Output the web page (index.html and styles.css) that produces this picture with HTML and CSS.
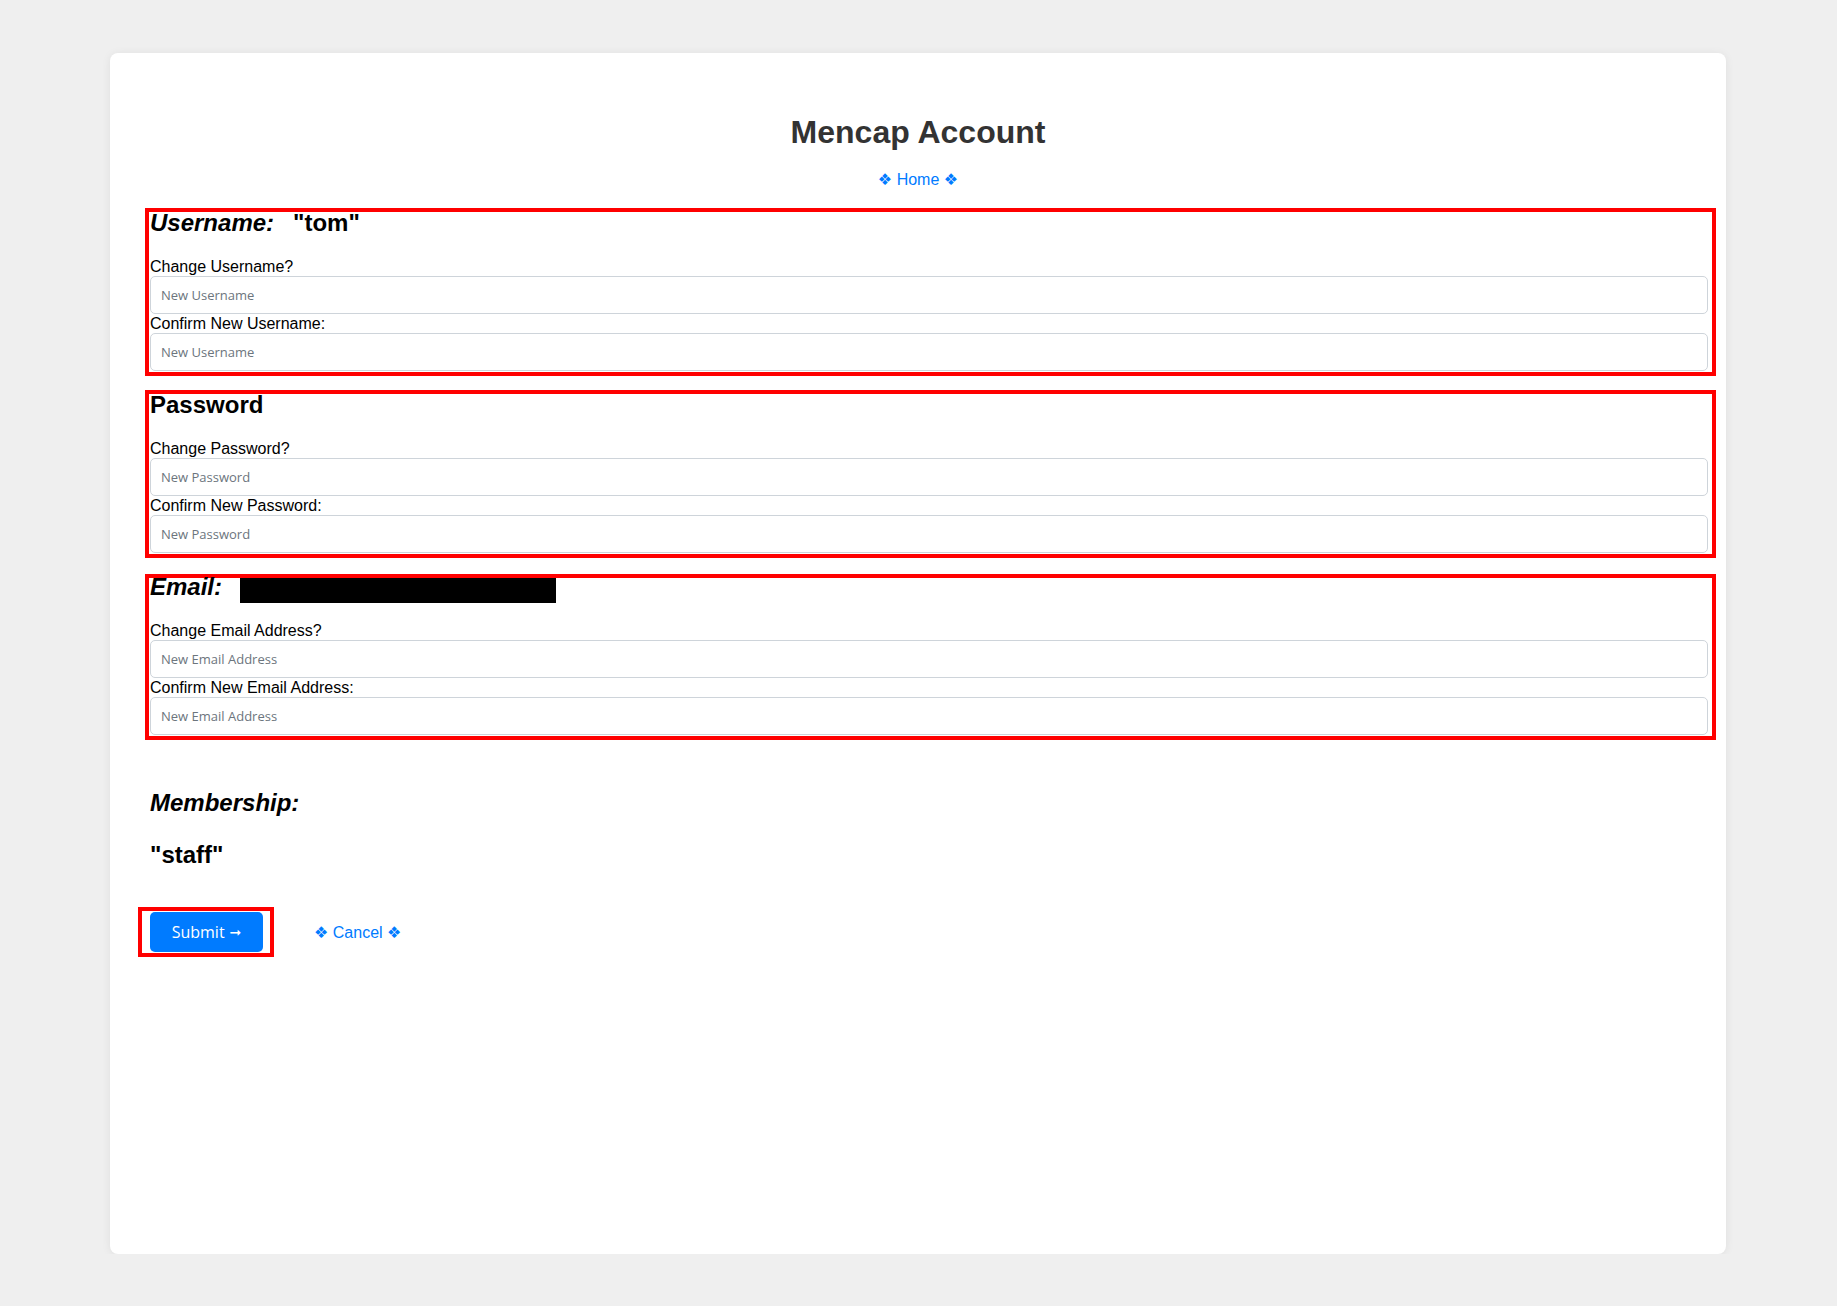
FILE: index.html
```html
<!DOCTYPE html>
<html lang="en">
<head>
<meta charset="utf-8">
<title>Mencap Account</title>
<link rel="stylesheet" href="styles.css">
</head>
<body>
<main class="card">
  <h1 class="title">Mencap Account</h1>
  <nav class="nav"><a class="link" href="#">❖ Home ❖</a></nav>
  <form class="form">
    <section class="box">
      <h2 class="box-head"><em>Username:</em><span class="value">"tom"</span></h2>
      <label class="label">Change Username?</label>
      <input class="field" type="text" placeholder="New Username">
      <label class="label">Confirm New Username:</label>
      <input class="field" type="text" placeholder="New Username">
    </section>
    <section class="box box-gap">
      <h2 class="box-head">Password</h2>
      <label class="label">Change Password?</label>
      <input class="field" type="password" placeholder="New Password">
      <label class="label">Confirm New Password:</label>
      <input class="field" type="password" placeholder="New Password">
    </section>
    <section class="box box-gap-lg">
      <h2 class="box-head email-head"><em>Email:</em><span class="redact"></span></h2>
      <label class="label">Change Email Address?</label>
      <input class="field" type="email" placeholder="New Email Address">
      <label class="label">Confirm New Email Address:</label>
      <input class="field" type="email" placeholder="New Email Address">
    </section>
    <h2 class="member"><em>Membership:</em></h2>
    <h2 class="member-value">"staff"</h2>
    <div class="actions">
      <div class="submit-wrap"><button class="submit" type="button">Submit <span class="arrow">➞</span></button></div>
      <a class="link cancel" href="#">❖ Cancel ❖</a>
    </div>
  </form>
</main>
</body>
</html>
```
FILE: styles.css
```css
html, body {
  margin: 0;
  padding: 0;
}
body {
  background: #efefef;
  font-family: "Liberation Sans", "DejaVu Sans", sans-serif;
  color: #000;
}
.card {
  box-sizing: border-box;
  width: 1616px;
  min-height: 1201px;
  margin: 53px 0 0 110px;
  padding: 60px 10px 0;
  background: #fff;
  border-radius: 8px;
  box-shadow: 0 1px 10px rgba(0, 0, 0, 0.07);
}
.title {
  margin: 0;
  font-size: 32px;
  line-height: 38px;
  font-weight: 700;
  color: #333;
  text-align: center;
}
.nav {
  margin-top: 17px;
  text-align: center;
  font-size: 16px;
  line-height: 24px;
}
.link {
  color: #007bff;
  text-decoration: none;
}
.form {
  margin-top: 16px;
  padding-left: 25px;
}
.box {
  border: 4px solid #ff0000;
  padding: 0 4px 1px 1px;
}
.box-gap {
  margin-top: 14px;
}
.box-gap-lg {
  margin-top: 16px;
}
.box-head {
  margin: 0 0 24px;
  font-size: 24px;
  line-height: 21px;
  font-weight: 700;
  color: #000;
}
.box-head em {
  font-style: italic;
}
.value {
  margin-left: 19px;
}
.email-head {
  display: flex;
  align-items: flex-start;
  height: 21px;
  margin-top: -2px;
}
.redact {
  display: block;
  width: 316px;
  height: 25px;
  margin: 2px 0 0 18px;
  background: #000;
}
.label {
  display: block;
  font-size: 16px;
  line-height: 19px;
  color: #000;
}
.field {
  display: block;
  box-sizing: border-box;
  width: 100%;
  height: 38px;
  margin: 0;
  padding: 0 10px;
  border: 1px solid #ced4da;
  border-radius: 5px;
  background: #fff;
  font-family: "Open Sans", sans-serif;
  font-size: 13px;
  color: #495057;
}
.field::placeholder {
  color: #6c757d;
}
.member {
  margin: 48px 0 0;
  padding-left: 5px;
  font-size: 24px;
  line-height: 29px;
  font-weight: 700;
}
.member-value {
  margin: 23px 0 0;
  padding-left: 5px;
  font-size: 24px;
  line-height: 29px;
  font-weight: 700;
}
.actions {
  display: flex;
  align-items: center;
  margin-top: 38px;
}
.submit-wrap {
  margin-left: -7px;
  padding: 1px 7px 1px 8px;
  border: 4px solid #ff0000;
  display: flex;
}
.submit {
  display: flex;
  align-items: center;
  justify-content: center;
  gap: 5px;
  width: 113px;
  height: 40px;
  padding: 0;
  border: none;
  border-radius: 5px;
  background: #007bff;
  color: #fff;
  font-family: "Open Sans", sans-serif;
  font-size: 16px;
  cursor: pointer;
}
.arrow {
  font-family: "DejaVu Sans", sans-serif;
  font-size: 14px;
  line-height: 1;
}
.cancel {
  margin-left: 40px;
  font-size: 16px;
  line-height: 24px;
  position: relative;
  top: 1px;
}
```
